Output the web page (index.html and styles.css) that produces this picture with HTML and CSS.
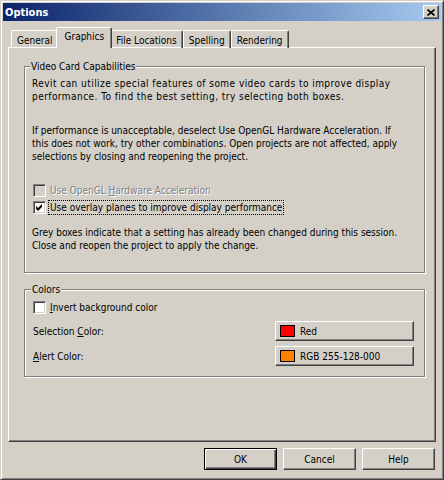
FILE: index.html
```html
<!DOCTYPE html>
<html lang="en">
<head>
    <meta charset="UTF-8">
    <title>Options</title>
    <link rel="stylesheet" href="styles.css">
</head>
<body>
<!--对话框-->
<div class="window">
    <!--标题栏-->
    <div class="titlebar">
        <span class="title">Options</span>
        <span class="close-btn">
            <svg width="8" height="7" viewBox="0 0 8 7"><path d="M0.5 0.5 L7.5 6.5 M7.5 0.5 L0.5 6.5" stroke="#000" stroke-width="1.6"/></svg>
        </span>
    </div>
    <!--选项卡-->
    <div class="tabs">
        <div class="tab">General</div>
        <div class="tab active">Graphics</div>
        <div class="tab">File Locations</div>
        <div class="tab">Spelling</div>
        <div class="tab">Rendering</div>
    </div>
    <div class="panel">
        <fieldset class="group video-group">
            <legend>Video Card Capabilities</legend>
            <p class="intro">Revit can utilize special features of some video cards to improve display<br>performance. To find the best setting, try selecting both boxes.</p>
            <p class="gap">If performance is unacceptable, deselect Use OpenGL Hardware Acceleration. If<br>this does not work, try other combinations. Open projects are not affected, apply<br>selections by closing and reopening the project.</p>
            <div class="check-list">
                <label class="check disabled">
                    <span class="box"></span>
                    <span class="check-text">Use OpenGL <u>H</u>ardware Acceleration</span>
                </label>
                <label class="check">
                    <span class="box">
                        <svg width="7" height="7" viewBox="0 0 7 7"><path d="M0 2 L2 4 L6 0 L6 3 L2 7 L0 5 Z" fill="#000"/></svg>
                    </span>
                    <span class="check-text focus">Use overlay planes to improve display performance</span>
                </label>
            </div>
            <p class="note">Grey boxes indicate that a setting has already been changed during this session.<br>Close and reopen the project to apply the change.</p>
        </fieldset>

        <fieldset class="group colors-group">
            <legend>Colors</legend>
            <label class="check">
                <span class="box"></span>
                <span class="check-text"><u>I</u>nvert background color</span>
            </label>
            <div class="color-row">
                <span>Selection <u>C</u>olor:</span>
                <div class="btn color-btn"><span class="swatch red"></span>Red</div>
            </div>
            <div class="color-row">
                <span><u>A</u>lert Color:</span>
                <div class="btn color-btn"><span class="swatch orange"></span>RGB 255-128-000</div>
            </div>
        </fieldset>
    </div>
    <!--底部按钮-->
    <div class="buttons">
        <div class="btn default">OK</div>
        <div class="btn">Cancel</div>
        <div class="btn">Help</div>
    </div>
</div>
</body>
</html>
```

FILE: styles.css
```css
body {
    margin: 0;
    background: #fff;
}

.window {
    width: 444px;
    height: 480px;
    box-sizing: border-box;
    background: #d4d0c8;
    border: 1px solid;
    border-color: #d4d0c8 #404040 #404040 #d4d0c8;
    box-shadow: inset 1px 1px #fff, inset -1px -1px #808080;
    padding: 2px;
    display: flex;
    flex-direction: column;
    font-family: "DejaVu Sans Condensed", "DejaVu Sans", sans-serif;
    font-stretch: condensed;
    font-size: 10px;
    line-height: 13px;
    color: #000;
}

/*标题栏*/
.titlebar {
    height: 18px;
    display: flex;
    align-items: center;
    justify-content: space-between;
    padding: 0 2px 0 2px;
    background: linear-gradient(to right, #0a246a, #a6caf0);
    color: #fff;
    font-weight: bold;
    font-size: 11px;
}

.close-btn {
    width: 16px;
    height: 14px;
    box-sizing: border-box;
    background: #d4d0c8;
    border: 1px solid;
    border-color: #fff #404040 #404040 #fff;
    box-shadow: inset -1px -1px #808080;
    display: flex;
    align-items: center;
    justify-content: center;
}

/*选项卡*/
.tabs {
    display: flex;
    align-items: flex-end;
    margin-top: 7px;
    padding-left: 8px;
    height: 20px;
    margin-bottom: -1px;
    position: relative;
    z-index: 1;
}

.tab {
    padding: 2px 5px 0 5px;
    border: 1px solid;
    border-bottom: none;
    border-color: #fff #404040 transparent #fff;
    box-shadow: inset -1px 0 #808080;
    border-radius: 2px 2px 0 0;
    display: flex;
    align-items: center;
    box-sizing: border-box;
    height: 18px;
}

.tab.active {
    height: 21px;
    margin: 0 -2px;
    padding: 0 7px 4px 7px;
    background: #d4d0c8;
    position: relative;
    z-index: 2;
}

.panel {
    flex: 1;
    margin: 0 5px;
    border: 1px solid;
    border-color: #fff #404040 #404040 #fff;
    box-shadow: inset -1px -1px #808080;
    padding: 12px 10px 0 15px;
}

/*分组框*/
.group {
    margin: 0;
    min-width: 0;
    border: 1px solid #808080;
    box-shadow: inset 1px 1px #fff, 1px 1px #fff;
    padding: 4px 10px 20px 7px;
}

.group legend {
    padding: 0 1px;
    margin-left: -2px;
    background: #d4d0c8;
}

.group p {
    margin: 0;
}

.group p.intro {
    letter-spacing: 0.45px;
}

.group p.gap {
    margin-top: 21px;
}

.check-list {
    margin-top: 19px;
}

.check {
    display: flex;
    align-items: center;
    height: 17px;
    margin-left: 1px;
}

.box {
    width: 13px;
    height: 13px;
    box-sizing: border-box;
    background: #fff;
    border: 1px solid;
    border-color: #808080 #fff #fff #808080;
    box-shadow: inset 1px 1px #404040, inset -1px -1px #d4d0c8;
    display: flex;
    align-items: center;
    justify-content: center;
    margin-right: 4px;
}

.check.disabled .box {
    background: #d4d0c8;
}

.check.disabled .check-text {
    color: #808080;
    text-shadow: 1px 1px #fff;
}

.check-text.focus {
    outline: 1px dotted #000;
    padding: 0 1px;
    margin-left: -1px;
}

.group p.note {
    margin-top: 10px;
}

.colors-group {
    margin-top: 10px;
    padding: 3px 10px 10px 8px;
}

.colors-group .check {
    margin-left: 0;
}

.color-row {
    display: flex;
    align-items: center;
    justify-content: space-between;
    margin-top: 5px;
}

/*按钮*/
.btn {
    box-sizing: border-box;
    background: #d4d0c8;
    border: 1px solid;
    border-color: #fff #404040 #404040 #fff;
    box-shadow: inset -1px -1px #808080;
    display: flex;
    align-items: center;
    justify-content: center;
}

.color-btn {
    width: 139px;
    height: 20px;
    justify-content: flex-start;
    padding-left: 4px;
}

.swatch {
    width: 15px;
    height: 12px;
    box-sizing: border-box;
    border: 1px solid #000;
    margin-right: 5px;
}

.swatch.red {
    background: #ff0000;
}

.swatch.orange {
    background: #ff8000;
}

.buttons {
    display: flex;
    justify-content: flex-end;
    gap: 6px;
    height: 22px;
    margin: 6px 6px 7px 0;
}

.buttons .btn {
    width: 73px;
    height: 22px;
}

.buttons .btn.default {
    border: 1px solid #000;
    box-shadow: inset 1px 1px #fff, inset -1px -1px #404040, inset -2px -2px #808080;
}
```
